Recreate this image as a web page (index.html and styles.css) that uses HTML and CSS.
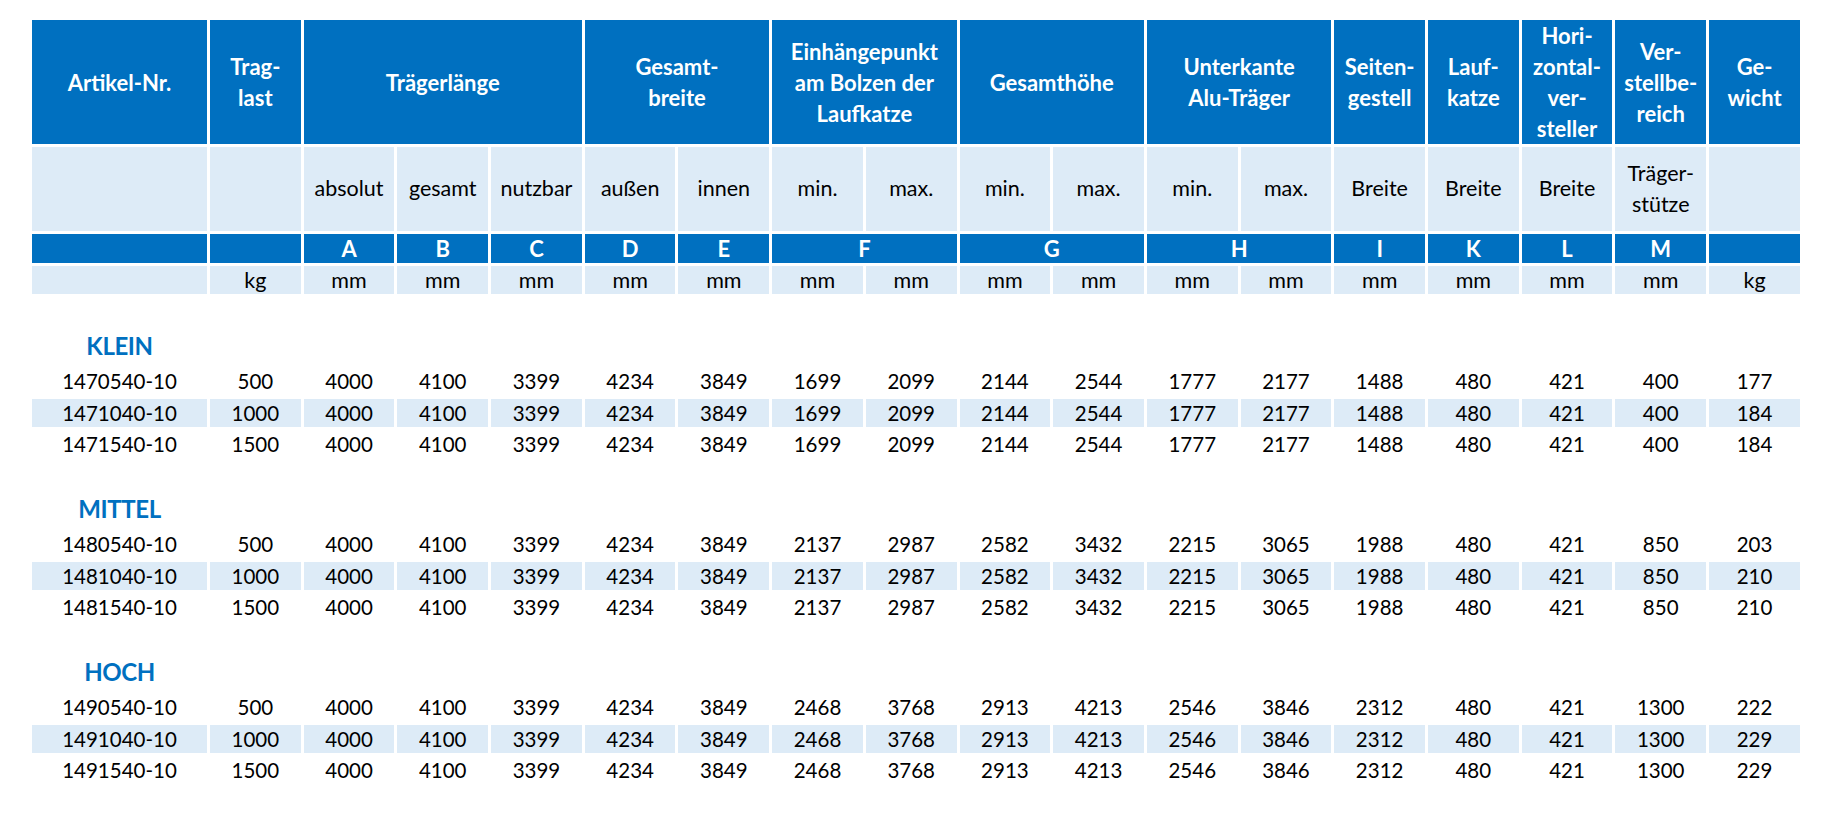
FILE: index.html
```html
<!DOCTYPE html>
<html lang="de">
<head>
<meta charset="utf-8">
<title>Technische Daten</title>
<link rel="stylesheet" href="styles.css">
</head>
<body>
<table class="spec">
  <colgroup>
    <col class="c-art">
    <col class="c-n"><col class="c-n"><col class="c-n"><col class="c-n"><col class="c-n"><col class="c-n">
    <col class="c-n"><col class="c-n"><col class="c-n"><col class="c-n"><col class="c-n"><col class="c-n">
    <col class="c-n"><col class="c-n"><col class="c-n"><col class="c-n"><col class="c-n">
  </colgroup>
  <thead>
    <tr class="h1">
      <td>Artikel-Nr.</td>
      <td>Trag-<br>last</td>
      <td colspan="3">Trägerlänge</td>
      <td colspan="2">Gesamt-<br>breite</td>
      <td colspan="2">Einhängepunkt<br>am Bolzen der<br>Laufkatze</td>
      <td colspan="2">Gesamthöhe</td>
      <td colspan="2">Unterkante<br>Alu-Träger</td>
      <td>Seiten-<br>gestell</td>
      <td>Lauf-<br>katze</td>
      <td>Hori-<br>zontal-<br>ver-<br>steller</td>
      <td>Ver-<br>stellbe-<br>reich</td>
      <td>Ge-<br>wicht</td>
    </tr>
    <tr class="h2">
      <td></td><td></td>
      <td>absolut</td><td>gesamt</td><td>nutzbar</td>
      <td>außen</td><td>innen</td>
      <td>min.</td><td>max.</td>
      <td>min.</td><td>max.</td>
      <td>min.</td><td>max.</td>
      <td>Breite</td><td>Breite</td><td>Breite</td>
      <td>Träger-<br>stütze</td>
      <td></td>
    </tr>
    <tr class="h3">
      <td></td><td></td>
      <td>A</td><td>B</td><td>C</td>
      <td>D</td><td>E</td>
      <td colspan="2">F</td>
      <td colspan="2">G</td>
      <td colspan="2">H</td>
      <td>I</td><td>K</td><td>L</td><td>M</td>
      <td></td>
    </tr>
    <tr class="h4">
      <td></td><td>kg</td>
      <td>mm</td><td>mm</td><td>mm</td><td>mm</td><td>mm</td>
      <td>mm</td><td>mm</td><td>mm</td><td>mm</td><td>mm</td><td>mm</td>
      <td>mm</td><td>mm</td><td>mm</td><td>mm</td>
      <td>kg</td>
    </tr>
  </thead>
  <tbody>
    <tr class="sp first"><td colspan="18"></td></tr>
    <tr class="grp"><td class="title">KLEIN</td><td colspan="17"></td></tr>
    <tr class="row"><td>1470540-10</td><td>500</td><td>4000</td><td>4100</td><td>3399</td><td>4234</td><td>3849</td><td>1699</td><td>2099</td><td>2144</td><td>2544</td><td>1777</td><td>2177</td><td>1488</td><td>480</td><td>421</td><td>400</td><td>177</td></tr>
    <tr class="row alt"><td>1471040-10</td><td>1000</td><td>4000</td><td>4100</td><td>3399</td><td>4234</td><td>3849</td><td>1699</td><td>2099</td><td>2144</td><td>2544</td><td>1777</td><td>2177</td><td>1488</td><td>480</td><td>421</td><td>400</td><td>184</td></tr>
    <tr class="row"><td>1471540-10</td><td>1500</td><td>4000</td><td>4100</td><td>3399</td><td>4234</td><td>3849</td><td>1699</td><td>2099</td><td>2144</td><td>2544</td><td>1777</td><td>2177</td><td>1488</td><td>480</td><td>421</td><td>400</td><td>184</td></tr>

    <tr class="sp"><td colspan="18"></td></tr>
    <tr class="grp"><td class="title">MITTEL</td><td colspan="17"></td></tr>
    <tr class="row"><td>1480540-10</td><td>500</td><td>4000</td><td>4100</td><td>3399</td><td>4234</td><td>3849</td><td>2137</td><td>2987</td><td>2582</td><td>3432</td><td>2215</td><td>3065</td><td>1988</td><td>480</td><td>421</td><td>850</td><td>203</td></tr>
    <tr class="row alt"><td>1481040-10</td><td>1000</td><td>4000</td><td>4100</td><td>3399</td><td>4234</td><td>3849</td><td>2137</td><td>2987</td><td>2582</td><td>3432</td><td>2215</td><td>3065</td><td>1988</td><td>480</td><td>421</td><td>850</td><td>210</td></tr>
    <tr class="row"><td>1481540-10</td><td>1500</td><td>4000</td><td>4100</td><td>3399</td><td>4234</td><td>3849</td><td>2137</td><td>2987</td><td>2582</td><td>3432</td><td>2215</td><td>3065</td><td>1988</td><td>480</td><td>421</td><td>850</td><td>210</td></tr>

    <tr class="sp"><td colspan="18"></td></tr>
    <tr class="grp"><td class="title">HOCH</td><td colspan="17"></td></tr>
    <tr class="row"><td>1490540-10</td><td>500</td><td>4000</td><td>4100</td><td>3399</td><td>4234</td><td>3849</td><td>2468</td><td>3768</td><td>2913</td><td>4213</td><td>2546</td><td>3846</td><td>2312</td><td>480</td><td>421</td><td>1300</td><td>222</td></tr>
    <tr class="row alt"><td>1491040-10</td><td>1000</td><td>4000</td><td>4100</td><td>3399</td><td>4234</td><td>3849</td><td>2468</td><td>3768</td><td>2913</td><td>4213</td><td>2546</td><td>3846</td><td>2312</td><td>480</td><td>421</td><td>1300</td><td>229</td></tr>
    <tr class="row"><td>1491540-10</td><td>1500</td><td>4000</td><td>4100</td><td>3399</td><td>4234</td><td>3849</td><td>2468</td><td>3768</td><td>2913</td><td>4213</td><td>2546</td><td>3846</td><td>2312</td><td>480</td><td>421</td><td>1300</td><td>229</td></tr>
  </tbody>
</table>
</body>
</html>
```
FILE: styles.css
```css
html, body {
  margin: 0;
  padding: 0;
  background: #ffffff;
}

body {
  font-family: Lato, "Open Sans", sans-serif;
  color: #000000;
}

.spec {
  border-collapse: separate;
  border-spacing: 3px;
  table-layout: fixed;
  width: 1774px;
  margin: 17px 0 0 29px;
}

.c-art { width: 175px; }
.c-n { width: 90.7px; }

.spec td {
  padding: 0;
  text-align: center;
  vertical-align: middle;
  font-size: 20.5px;
  white-space: nowrap;
  overflow: hidden;
}

.h1 td {
  background: #0070c0;
  color: #ffffff;
  font-weight: 700;
  font-size: 22px;
  line-height: 31px;
  height: 123px;
}

.h2 td {
  background: #ddebf7;
  font-size: 21.5px;
  line-height: 31.5px;
  height: 84px;
}

.h3 td {
  background: #0070c0;
  color: #ffffff;
  font-weight: 700;
  font-size: 22px;
  line-height: 29px;
  height: 29px;
}

.h4 td {
  background: #ddebf7;
  font-size: 21.5px;
  line-height: 28px;
  height: 28px;
}

.sp td {
  height: 28.5px;
}

.sp.first td {
  height: 30px;
}

.grp td {
  height: 34px;
}

.grp .title {
  color: #0070c0;
  font-weight: 700;
  font-size: 24px;
  letter-spacing: -0.4px;
  height: 30px;
  padding-bottom: 4px;
}

.row td {
  height: 28.5px;
  line-height: 28px;
}

.row.alt td {
  background: #ddebf7;
}
```
